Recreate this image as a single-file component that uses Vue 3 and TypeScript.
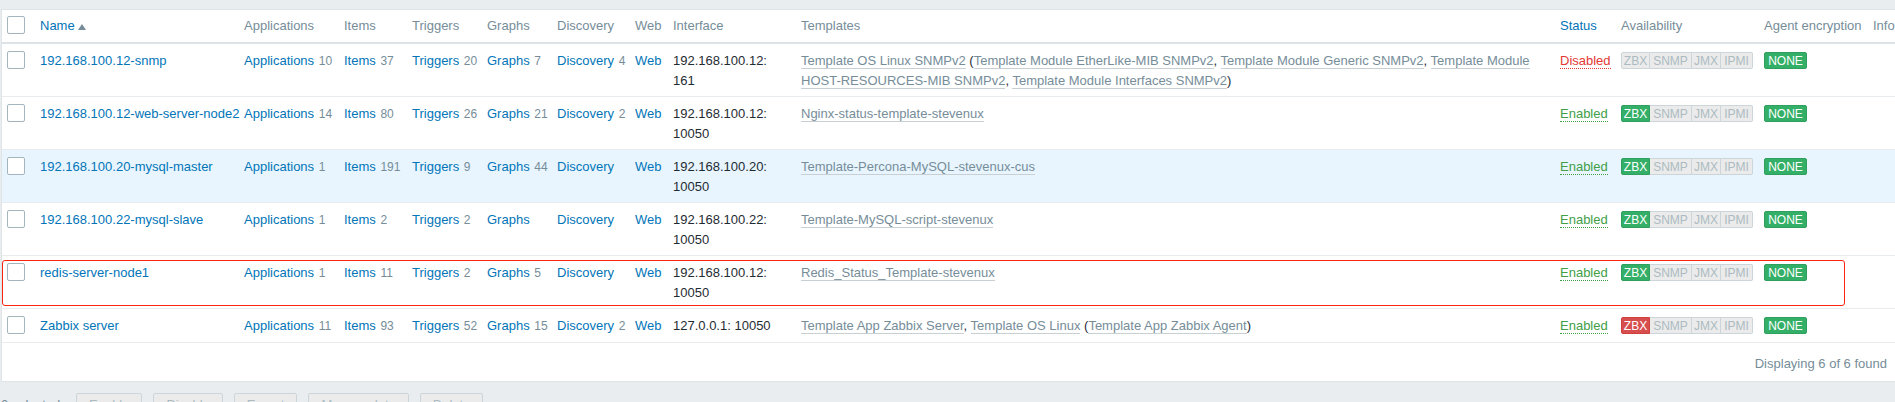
<script setup lang="ts">
import { ref } from 'vue'

interface TemplateLink {
  name: string
  before?: string
  after?: string
}

interface Host {
  name: string
  applications: number
  items: number
  triggers: number
  graphs?: number
  discovery?: number
  address: string
  port: string
  templates: TemplateLink[]
  enabled: boolean
  agent: 'unknown' | 'ok' | 'error'
  hovered?: boolean
  marked?: boolean
}

const hosts: Host[] = [
  {
    name: '192.168.100.12-snmp', applications: 10, items: 37, triggers: 20, graphs: 7, discovery: 4,
    address: '192.168.100.12:', port: '161', enabled: false, agent: 'unknown',
    templates: [
      { name: 'Template OS Linux SNMPv2' },
      { before: ' (', name: 'Template Module EtherLike-MIB SNMPv2' },
      { before: ', ', name: 'Template Module Generic SNMPv2' },
      { before: ', ', name: 'Template Module HOST-RESOURCES-MIB SNMPv2' },
      { before: ', ', name: 'Template Module Interfaces SNMPv2', after: ')' },
    ],
  },
  {
    name: '192.168.100.12-web-server-node2', applications: 14, items: 80, triggers: 26, graphs: 21, discovery: 2,
    address: '192.168.100.12:', port: '10050', enabled: true, agent: 'ok',
    templates: [{ name: 'Nginx-status-template-stevenux' }],
  },
  {
    name: '192.168.100.20-mysql-master', applications: 1, items: 191, triggers: 9, graphs: 44,
    address: '192.168.100.20:', port: '10050', enabled: true, agent: 'ok', hovered: true,
    templates: [{ name: 'Template-Percona-MySQL-stevenux-cus' }],
  },
  {
    name: '192.168.100.22-mysql-slave', applications: 1, items: 2, triggers: 2,
    address: '192.168.100.22:', port: '10050', enabled: true, agent: 'ok',
    templates: [{ name: 'Template-MySQL-script-stevenux' }],
  },
  {
    name: 'redis-server-node1', applications: 1, items: 11, triggers: 2, graphs: 5,
    address: '192.168.100.12:', port: '10050', enabled: true, agent: 'ok', marked: true,
    templates: [{ name: 'Redis_Status_Template-stevenux' }],
  },
  {
    name: 'Zabbix server', applications: 11, items: 93, triggers: 52, graphs: 15, discovery: 2,
    address: '127.0.0.1:', port: '10050', enabled: true, agent: 'error',
    templates: [
      { name: 'Template App Zabbix Server' },
      { before: ', ', name: 'Template OS Linux' },
      { before: ' (', name: 'Template App Zabbix Agent', after: ')' },
    ],
  },
]

const selected = ref<string[]>([])
const actions = ['Enable', 'Disable', 'Export', 'Mass update', 'Delete']

function toggleAll(event: Event) {
  selected.value = (event.target as HTMLInputElement).checked ? hosts.map((h) => h.name) : []
}
</script>

<template>
  <main class="page">
    <section class="panel">
      <table class="hosts">
        <colgroup>
          <col class="w-check" /><col class="w-name" /><col class="w-apps" /><col class="w-items" />
          <col class="w-triggers" /><col class="w-graphs" /><col class="w-discovery" /><col class="w-web" />
          <col class="w-interface" /><col /><col class="w-status" /><col class="w-avail" />
          <col class="w-encryption" /><col class="w-info" />
        </colgroup>
        <thead>
          <tr>
            <th><input type="checkbox" aria-label="Select all hosts" @change="toggleAll" /></th>
            <th>
              <a href="#">Name
                <svg class="sort" viewBox="0 0 8 6" width="8" height="6" aria-hidden="true"><path d="M4 0 8 6H0z" /></svg>
              </a>
            </th>
            <th>Applications</th>
            <th>Items</th>
            <th>Triggers</th>
            <th>Graphs</th>
            <th>Discovery</th>
            <th>Web</th>
            <th>Interface</th>
            <th>Templates</th>
            <th><a href="#">Status</a></th>
            <th>Availability</th>
            <th>Agent encryption</th>
            <th>Info</th>
          </tr>
        </thead>
        <tbody>
          <tr v-for="host in hosts" :key="host.name" :class="{ hovered: host.hovered }">
            <td>
              <input v-model="selected" type="checkbox" :value="host.name" :aria-label="host.name" />
              <span v-if="host.marked" class="marker"></span>
            </td>
            <td><a href="#">{{ host.name }}</a></td>
            <td><a href="#">Applications</a> <sup>{{ host.applications }}</sup></td>
            <td><a href="#">Items</a> <sup>{{ host.items }}</sup></td>
            <td><a href="#">Triggers</a> <sup>{{ host.triggers }}</sup></td>
            <td><a href="#">Graphs</a> <sup>{{ host.graphs }}</sup></td>
            <td><a href="#">Discovery</a> <sup>{{ host.discovery }}</sup></td>
            <td><a href="#">Web</a></td>
            <td class="interface">{{ host.address }} {{ host.port }}</td>
            <td class="templates"><template v-for="t in host.templates" :key="t.name">{{ t.before }}<a href="#">{{ t.name }}</a>{{ t.after }}</template></td>
            <td><a href="#" class="status" :class="host.enabled ? 'on' : 'off'">{{ host.enabled ? 'Enabled' : 'Disabled' }}</a></td>
            <td>
              <div class="avail">
                <span :class="host.agent">ZBX</span><span>SNMP</span><span>JMX</span><span>IPMI</span>
              </div>
            </td>
            <td><span class="none">NONE</span></td>
            <td></td>
          </tr>
        </tbody>
      </table>
      <div class="summary">Displaying 6 of 6 found</div>
    </section>
    <footer class="actions">
      <span class="count">{{ selected.length }} selected</span>
      <button v-for="action in actions" :key="action" type="button" :disabled="!selected.length">{{ action }}</button>
    </footer>
  </main>
</template>

<style>
html {
  background: #e9edf0;
}

body {
  margin: 0;
  overflow: hidden;
}
</style>

<style scoped>
.page {
  padding-top: 9px;
  color: #1f2c33;
  font: 13px/20px "Liberation Sans", Arial, sans-serif;
}

.panel {
  margin-left: 1px;
  background: #fff;
  border: 1px solid #dfe4e7;
  border-right: 0;
}

.hosts {
  width: 100%;
  table-layout: fixed;
  border-collapse: separate;
  border-spacing: 0;
}

.w-check { width: 33px; }
.w-name { width: 204px; }
.w-apps { width: 100px; }
.w-items { width: 68px; }
.w-triggers { width: 75px; }
.w-graphs { width: 70px; }
.w-discovery { width: 78px; }
.w-web { width: 38px; }
.w-interface { width: 128px; }
.w-status { width: 61px; }
.w-avail { width: 143px; }
.w-encryption { width: 109px; }
.w-info { width: 27px; }

th,
td {
  padding: 7px 0 5px 5px;
  border-bottom: 1px solid #e8ecef;
  text-align: left;
  vertical-align: top;
  font-weight: normal;
  white-space: nowrap;
}

th {
  padding: 6px 0 6px 5px;
  border-bottom: 2px solid #dce2e5;
  color: #768d99;
}

tbody tr {
  position: relative;
}

tbody tr:last-child td {
  padding-bottom: 6px;
}

.hovered {
  background: #e8f5ff;
}

a {
  color: #0275b8;
  text-decoration: none;
}

.sort {
  fill: #768d99;
}

sup {
  margin-left: 1px;
  color: #768d99;
  font-size: 12px;
  line-height: 1;
  vertical-align: baseline;
}

input {
  appearance: none;
  display: block;
  box-sizing: border-box;
  width: 18px;
  height: 18px;
  margin: 0;
  background: #fff;
  border: 1px solid #a5b5bd;
  border-radius: 2px;
}

input:checked {
  background: #0275b8;
}

.marker {
  position: absolute;
  inset: 4px 50px 3px 0;
  box-sizing: border-box;
  border: 1px solid #fa2413;
  border-radius: 3px;
  pointer-events: none;
}

.interface {
  padding-right: 16px;
  white-space: normal;
}

.templates {
  padding-right: 5px;
  white-space: normal;
}

.templates a {
  color: #768d99;
  border-bottom: 1px solid #c8d0d4;
}

.status {
  border-bottom: 1px dotted;
}

.status.on {
  color: #429e47;
}

.status.off {
  color: #e33734;
}

.avail {
  display: grid;
  grid-template-columns: 29px 42px 29px 32px;
}

.avail span,
.none {
  box-sizing: border-box;
  height: 17px;
  border: 1px solid #ccd5d9;
  font-size: 12px;
  line-height: 16px;
  text-align: center;
}

.avail span {
  background: #ebebeb;
  color: #acbbc2;
}

.avail span + span {
  border-left: 0;
}

.avail span:first-child {
  border-radius: 2px 0 0 2px;
}

.avail span:last-child {
  border-radius: 0 2px 2px 0;
}

.avail .ok,
.none {
  background: #34af67;
  border-color: #2f9f5e;
  color: #fff;
}

.avail .error {
  background: #d64e4e;
  border-color: #d23d3d;
  color: #fff;
}

.avail,
.none {
  margin-top: 1px;
}

.none {
  display: block;
  width: 43px;
  border-radius: 2px;
}

.summary {
  padding: 11px 8px 7px;
  color: #768d99;
  text-align: right;
}

.actions {
  display: flex;
  align-items: center;
  gap: 11px;
  padding: 11px 0 10px 1px;
}

.count {
  min-width: 64px;
  color: #768d99;
}

button {
  height: 24px;
  padding: 0 12px;
  background: #ebebeb;
  border: 1px solid #ccd5d9;
  border-radius: 2px;
  color: #acbbc2;
  font: inherit;
  line-height: 22px;
}
</style>
